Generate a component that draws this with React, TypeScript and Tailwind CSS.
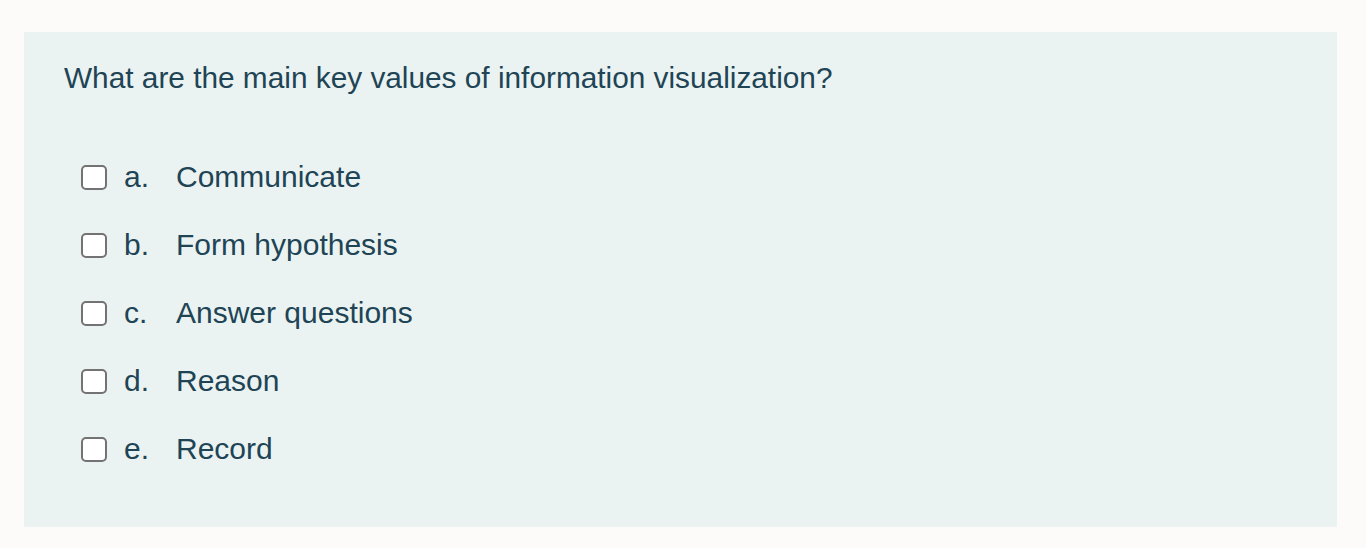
import React from "react";

const options = [
  { l: "a.", t: "Communicate" },
  { l: "b.", t: "Form hypothesis" },
  { l: "c.", t: "Answer questions" },
  { l: "d.", t: "Reason" },
  { l: "e.", t: "Record" },
];

export default function App() {
  return (
    <div
      className="w-[1366px] h-[548px] bg-[#fcfbf9] pt-[32px] pl-[24px] text-[#1e4455]"
      style={{ fontFamily: '"Liberation Sans", Arial, Helvetica, sans-serif' }}
    >
      <div className="w-[1313px] h-[495px] bg-[#eaf3f1] pl-[40px] pt-[29px]">
        <div className="text-[29.8px] leading-[34px]">
          What are the main key values of information visualization?
        </div>
        <div className="mt-[65px] flex flex-col gap-[34px] pl-[17px]">
          {options.map((o) => (
            <div key={o.l} className="flex items-start h-[34px] text-[30px] leading-[34px]">
              <span className="mt-[5px] w-[26px] h-[25px] rounded-[5px] border-2 border-[#737373] bg-white shrink-0" />
              <span className="ml-[17px] w-[52px]">{o.l}</span>
              <span>{o.t}</span>
            </div>
          ))}
        </div>
      </div>
    </div>
  );
}
